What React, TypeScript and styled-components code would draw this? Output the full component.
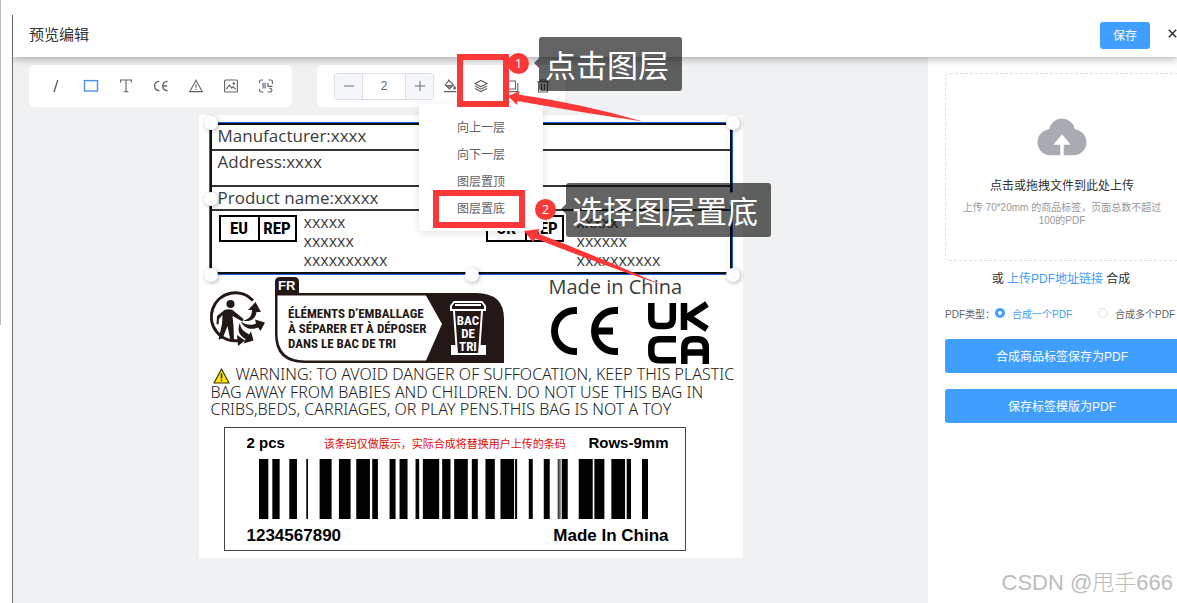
import React from "react";
import styled, { createGlobalStyle } from "styled-components";

const zh = `"Liberation Sans", "Noto Sans CJK SC", sans-serif`;
const label = `"Open Sans", "Noto Sans", sans-serif`;
const narrow = `"Liberation Sans Narrow", "Roboto Condensed", Roboto, sans-serif`;

const Global = createGlobalStyle`
  *, *::before, *::after { box-sizing: border-box; }
  body { margin: 0; background: #fff; font-family: ${zh}; color: #303133; overflow-x: hidden; }
  button { font-family: inherit; cursor: pointer; }
  svg { display: block; overflow: visible; }
`;

const Page = styled.div`
  position: relative;
  display: flex;
  min-height: 100vh;
  padding: 15px 0 0 12px;
  background: linear-gradient(#b9b9b9, #b9b9b9) 0 0 / 1px 325px no-repeat #fff;
`;

const Dialog = styled.main`
  flex: 1;
  min-width: 0;
  display: flex;
  flex-direction: column;
  border-left: 1px solid #6b6b6b;
`;

const Header = styled.header`
  position: relative;
  z-index: 1;
  display: flex;
  align-items: center;
  height: 42px;
  padding: 0 0 2px 16px;
  background: #fff;
  box-shadow: 0 2px 8px rgba(0, 0, 0, 0.3);
  clip-path: inset(0 0 -12px 0);
`;

const Title = styled.h1`
  flex: 1;
  margin: 0;
  font-size: 15px;
  font-weight: 400;
  line-height: 20px;
`;

const SaveButton = styled.button`
  width: 50px;
  height: 27px;
  padding: 0 0 2px;
  border: 0;
  border-radius: 3px;
  background: #409eff;
  color: #fff;
  font-size: 12px;
`;

const CloseButton = styled.button`
  margin-left: 18px;
  padding: 0 0 4px;
  border: 0;
  background: none;
  color: #303133;
`;

const Body = styled.div`
  flex: 1;
  display: flex;
`;

const Workspace = styled.section`
  flex: 1;
  min-width: 0;
  padding: 8px 16px 45px;
  background: #f0f1f3;
`;

const Toolbars = styled.div`
  position: relative;
  z-index: 2;
  display: flex;
  gap: 25px;
`;

const Toolbar = styled.div<{ $edit?: boolean }>`
  display: flex;
  align-items: center;
  height: 42px;
  padding: ${(p) => (p.$edit ? "0 7px 0 17px" : "0 9px")};
  border-radius: 5px;
  background: #fff;
`;

const ToolButton = styled.button<{ $active?: boolean; $slim?: boolean }>`
  display: flex;
  align-items: center;
  justify-content: center;
  width: ${(p) => (p.$slim ? 31 : 35)}px;
  height: 42px;
  padding: 0 0 1px;
  border: 0;
  background: none;
  color: ${(p) => (p.$active ? "#4a90f7" : "#606266")};
`;

const Stepper = styled.div`
  display: flex;
  width: 100px;
  height: 27px;
  border: 1px solid #dcdfe6;
  border-radius: 3px;
  overflow: hidden;
`;

const StepButton = styled.button`
  display: flex;
  align-items: center;
  justify-content: center;
  width: 27px;
  padding: 0;
  border: 0;
  background: #f5f7fa;
  color: #606266;
`;

const StepInput = styled.input`
  flex: 1;
  min-width: 0;
  padding: 0;
  border: 1px solid #dcdfe6;
  border-width: 0 1px;
  text-align: center;
  font-family: ${zh};
  font-size: 12px;
  color: #606266;
`;

const Anchor = styled.div`
  position: relative;
`;

const Menu = styled.ul`
  position: absolute;
  left: -46px;
  top: 39px;
  width: 124px;
  margin: 0;
  padding: 10px 0 9px;
  list-style: none;
  border-radius: 3px;
  background: #fff;
  box-shadow: 0 2px 8px rgba(0, 0, 0, 0.12);
`;

const MenuItem = styled.li`
  position: relative;
`;

const MenuButton = styled.button`
  width: 100%;
  height: 27px;
  padding: 0 0 3px;
  border: 0;
  background: none;
  font-size: 12px;
  color: #606266;
  display: block;
`;

const Callout = styled.div<{ $x: number; $y: number; $z?: number }>`
  position: absolute;
  left: ${(p) => p.$x}px;
  top: ${(p) => p.$y}px;
  z-index: ${(p) => p.$z ?? 2};
  pointer-events: none;
`;

const Frame = styled.div<{ $w: number; $h: number }>`
  width: ${(p) => p.$w}px;
  height: ${(p) => p.$h}px;
  border: 6px solid #fb3838;
`;

const Badge = styled.div`
  width: 21px;
  height: 21px;
  border-radius: 50%;
  background: #fb3838;
  color: #fff;
  font: 13px/20px "Open Sans", sans-serif;
  text-align: center;
`;

const Tip = styled.div`
  position: relative;
  height: 54px;
  padding: 0 13px 0 6px;
  border-radius: 3px;
  background: rgba(0, 0, 0, 0.61);
  color: #fff;
  font: 31px/54px "Noto Sans CJK SC", sans-serif;
  white-space: nowrap;
  &::before {
    content: "";
    position: absolute;
    left: -5px;
    top: 21px;
    border: 5px solid transparent;
    border-left: 0;
    border-right-color: rgba(0, 0, 0, 0.61);
  }
`;

const Canvas = styled.article`
  width: 544px;
  margin: 8px auto 0;
  padding: 8px 0 7px 11px;
  background: #fff;
  color: #3c3c3c;
  font-family: ${label};
`;

const Selection = styled.div`
  position: relative;
  width: 522px;
  border: 2px solid #111;
  outline: 1px solid #1f62ee;
`;

const Handles = styled.div`
  position: absolute;
  inset: -2px -3px -3px -1px;
`;

const Handle = styled.span<{ $x: number; $y: number }>`
  position: absolute;
  left: ${(p) => p.$x}%;
  top: ${(p) => p.$y}%;
  width: 14px;
  height: 14px;
  margin: -7px;
  border-radius: 50%;
  background: #fff;
  box-shadow: 1px 1px 4px rgba(0, 0, 0, 0.3);
`;

const Field = styled.div<{ $h: number }>`
  height: ${(p) => p.$h}px;
  padding-left: 6px;
  border-bottom: 2px solid #333;
  font-size: 17px;
  line-height: 22px;
`;

const Reps = styled.div`
  display: grid;
  grid-template-columns: 267px 1fr;
  height: 61px;
  padding: 2px 0 0 7px;
`;

const Rep = styled.div<{ $gap: number }>`
  display: flex;
  align-items: flex-start;
  gap: ${(p) => p.$gap}px;
`;

const RepMark = styled.div`
  display: grid;
  grid-template-columns: 37px 37px;
  margin-top: 2px;
  border: 2px solid #000;
  width: 78px;
  height: 27px;
  color: #000;
  font: bold 17px/23px ${narrow};
  text-align: center;
  span + span { border-left: 2px solid #000; }
`;

const RepLines = styled.div`
  font-size: 16px;
  line-height: 19px;
`;

const Marks = styled.div`
  display: flex;
  align-items: flex-start;
  padding-top: 3px;
  height: 92px;
`;

const Banner = styled.div`
  margin-left: 10px;
`;

const Origin = styled.div`
  margin-left: 44px;
`;

const OriginText = styled.div`
  font-size: 20px;
  line-height: 20px;
  margin-bottom: 5px;
`;

const Logos = styled.div`
  display: flex;
  gap: 30px;
`;

const Warning = styled.p`
  margin: 0;
  padding-left: 1px;
  font-family: "Noto Sans", "Open Sans", sans-serif;
  font-weight: 300;
  font-size: 16px;
  line-height: 17px;
  color: #222;
  white-space: nowrap;
  svg { display: inline-block; vertical-align: -4px; margin: 0 6px 0 2px; }
`;

const BarcodeCard = styled.div`
  width: 462px;
  height: 124px;
  margin: 9px 0 0 14px;
  padding: 5px 16px 0 22px;
  border: 1px solid #444;
  font-family: "Liberation Sans", "Noto Sans CJK SC", sans-serif;
  color: #000;
`;

const CardRow = styled.div<{ $large?: boolean }>`
  display: flex;
  justify-content: space-between;
  align-items: center;
  height: ${(p) => (p.$large ? 20 : 19)}px;
  font-size: ${(p) => (p.$large ? 17 : 15)}px;
  font-weight: bold;
`;

const Notice = styled.span`
  margin-left: 16px;
  font-size: 11px;
  font-weight: 400;
  color: #e00b0b;
`;

const BarBox = styled.div`
  padding: 7px 0 7px 12px;
`;

const Side = styled.aside`
  width: 249px;
  padding: 16px 0 0 17px;
  background: #fff;
`;

const Upload = styled.button`
  display: flex;
  flex-direction: column;
  align-items: center;
  width: 100%;
  height: 188px;
  padding: 34px 14px 0 15px;
  border: 1px dashed #dcdfe6;
  border-right: 0;
  border-radius: 5px 0 0 5px;
  background: #fff;
  color: #303133;
`;

const UploadTitle = styled.span`
  margin-top: 12px;
  font-size: 12px;
  line-height: 20px;
`;

const UploadHint = styled.span`
  margin-top: 5px;
  font-size: 10px;
  line-height: 13px;
  color: #999;
`;

const LinkRow = styled.p`
  margin: 8px 0 0;
  text-align: center;
  font-size: 12px;
  line-height: 20px;
  a { color: #409eff; text-decoration: none; }
`;

const Radios = styled.fieldset`
  display: flex;
  align-items: center;
  margin: 14px 0 16px;
  padding: 0;
  border: 0;
  height: 20px;
  font-size: 10px;
  color: #606266;
  white-space: nowrap;
`;

const RadioLabel = styled.label<{ $on?: boolean }>`
  display: flex;
  align-items: center;
  gap: 7px;
  margin-left: ${(p) => (p.$on ? 0 : 26)}px;
  color: ${(p) => (p.$on ? "#409eff" : "#606266")};
  input {
    appearance: none;
    width: 10px;
    height: 10px;
    margin: 0;
    border: 1px solid #dcdfe6;
    border-radius: 50%;
    background: #fff;
  }
  input:checked { border: 3px solid #409eff; }
`;

const WideButton = styled.button`
  display: block;
  width: 100%;
  height: 34px;
  margin-bottom: 16px;
  padding: 0 0 2px 2px;
  border: 0;
  border-radius: 3px 0 0 3px;
  background: #409eff;
  color: #fff;
  font-size: 12px;
`;

const Watermark = styled.div`
  position: absolute;
  right: 4px;
  bottom: 4px;
  color: #bdbdbd;
  font: 300 22px/32px "Liberation Sans", "Noto Sans CJK SC", sans-serif;
  text-shadow: 1px 1px 0 #fff;
`;

const Icon = ({ children, size = 14 }: { children: React.ReactNode; size?: number }) => (
  <svg width={size} height={size} viewBox="0 0 14 14" fill="none" stroke="currentColor" strokeWidth="1.1" aria-hidden="true">
    {children}
  </svg>
);

const shapes: { name: string; active?: boolean; art: React.ReactNode }[] = [
  { name: "直线", art: <path d="M8.8 1 5 13" strokeWidth="1.4" /> },
  { name: "矩形", active: true, art: <rect x="0.5" y="1.6" width="13" height="10.4" strokeWidth="1.4" /> },
  { name: "文本", art: <path d="M1.6 3.6V1h10.8v2.6M7 1v11.8M4.6 12.8h4.8" /> },
  { name: "CE 标志", art: <path d="M5.4 2.4C-1 2-1 12 5.4 11.6M13.6 2.4C7 2 7 12 13.6 11.6M9.2 7h3.8" strokeWidth="1.3" /> },
  { name: "警告", art: <path d="M7 1.2 13.2 12.6H.8zM7 5.2v3.6M7 9.8v1.3" /> },
  {
    name: "图片",
    art: (
      <>
        <rect x="0.6" y="1" width="12.8" height="12" rx="1" />
        <path d="m2.2 10.2 3.2-4 2.4 3 1.4-1.4 2.6 2.6" />
        <circle cx="9.8" cy="4.6" r=".7" />
      </>
    ),
  },
  {
    name: "条码",
    art: (
      <>
        <path d="M.6 4V2.4Q.6 1 2 1h2M9.6 1H12q1.4 0 1.4 1.4V5M.6 9.8v2Q.6 13 2 13h2.4" />
        <path d="M4.2 4v5.6M6.2 4v5.6" strokeWidth="1.8" stroke="#8d96a8" />
        <path d="M9 4v3.4h4.4M8.6 13h3a1.9 1.9 0 0 0 0-3.6h-1.2" />
      </>
    ),
  },
];

/* Each bar is [offset, width] in thirds of a pixel. */
const bars = [
  [0, 28], [40, 22], [91, 23], [142, 5], [182, 36], [240, 35], [292, 41], [340, 17], [392, 18], [422, 24],
  [470, 11], [492, 49], [550, 25], [586, 41], [639, 18], [680, 28], [725, 41], [769, 6], [810, 12], [855, 18],
  [897, 3], [902, 3], [909, 18], [960, 42], [1007, 30], [1058, 41], [1104, 13], [1150, 18],
];

const Bars = () => (
  <svg width="389" height="60" viewBox="0 0 1168 180" preserveAspectRatio="none" role="img" aria-label="1234567890">
    {bars.map(([x, w]) => (
      <rect key={x} x={x} width={w} height="180" />
    ))}
  </svg>
);

const Triman = () => (
  <svg width="55" height="86" viewBox="0 0 55 86" fill="#231815" aria-hidden="true">
    <path d="M43 23.500A24 24 0 1 0 29 63.500" fill="none" stroke="#231815" strokeWidth="3" />
    <path d="m27 58 8 5.500-7 5.500z" />
    <circle cx="20.500" cy="27" r="4" />
    <path d="M14.500 33q4-1.500 8 0l11 9-1 2.500-10-5.500 1 10 .5 15h-3.500l-3-15-5 12.500-4 1 3.500-15.500.5-9-3.500 4-.5 5.500-2-.5.5-8z" />
    <path d="M33 43.500c6-1 9-4.500 9-10.500h-4l7.500-8 5.500 10h-4.500c-1 7-6 10.500-13.500 8.500z" />
    <path d="M31 44.500c5 4 11 4 15 2l-1-4 10 3-4.500 8.500-2.500-3.500c-7 3-14 1-17-6z" />
    <path d="M30 45.500c0 6 4 9 9 12l2-3 2.500 9-10 3 2-4.500c-7-4-8.500-9-5.500-16.500z" />
  </svg>
);

const SortingBanner = () => (
  <svg width="230" height="87" viewBox="0 0 230 87" role="img" aria-label="Consigne de tri">
    <path d="M0 16V5q0-5 5-5h14q5 0 5 5v11h177q28 0 28 26v44H29Q0 86 0 57z" fill="#231815" />
    <path d="M2.500 18.500H151L167 47l-16 36.500H30Q2.500 83 2.500 57z" fill="#fff" />
    <g fontFamily={narrow} fontWeight="bold" fill="#231815" fontSize="13">
      <text x="13" y="41">ÉLÉMENTS D’EMBALLAGE</text>
      <text x="13" y="56">À SÉPARER ET À DÉPOSER</text>
      <text x="13" y="71">DANS LE BAC DE TRI</text>
    </g>
    <text x="3" y="13" fontFamily="Liberation Sans" fontWeight="bold" fontSize="13" fill="#fff">FR</text>
    <g fill="none" stroke="#fff" strokeWidth="2">
      <path d="M176 33v-4l3-4h28l3 4v4zM180 28h26" />
      <path d="m179 34 3 43h22l3-43" />
      <path d="M177 69h4v8h-4zM206 69h4v8h-4z" fill="#fff" />
    </g>
    <g fontFamily={narrow} fontWeight="bold" fill="#fff" fontSize="13" textAnchor="middle">
      <text x="193" y="48">BAC</text>
      <text x="193" y="61">DE</text>
      <text x="193" y="74">TRI</text>
    </g>
  </svg>
);

const CeLogo = () => (
  <svg width="69" height="60" viewBox="0 0 69 60" fill="none" stroke="#000" strokeWidth="7" role="img" aria-label="CE">
    <path d="M28 8.500h-2a20.500 20.500 0 0 0 0 41h2M69 8.500h-3a20.500 20.500 0 0 0 0 41h3M46 29h18" />
  </svg>
);

const UkcaLogo = () => (
  <svg width="61" height="62" viewBox="0 0 61 62" fill="none" stroke="#000" strokeWidth="6.500" role="img" aria-label="UKCA">
    <path d="M3.300 1v16q0 7 7 7h7.500q7 0 7-7V1M36 1v27M59 2 40 14.500 59 27" />
    <path d="M28 37.300H11.300q-8 0-8 8v5q0 8 8 8H28M36.300 62V46q0-8.700 8.500-8.700h4.500q8.500 0 8.500 8.700v16M36 50.500h21" />
  </svg>
);

const WarnSign = () => (
  <svg width="17" height="16" viewBox="0 0 17 16" aria-hidden="true">
    <path d="M8.500 1 16 15H1z" fill="#ffe500" stroke="#3a3500" strokeWidth="1.200" strokeLinejoin="round" />
    <path d="M8.500 5.500v5M8.500 11.800v1.500" stroke="#222" strokeWidth="1.500" />
  </svg>
);

const handles = [[0, 0], [50, 0], [100, 0], [0, 50], [100, 50], [0, 100], [50, 100], [100, 100]];

const RepBlock = ({ region, gap }: { region: string; gap: number }) => (
  <Rep $gap={gap}>
    <RepMark>
      <span>{region}</span>
      <span>REP</span>
    </RepMark>
    <RepLines>
      xxxxx
      <br />
      xxxxxx
      <br />
      xxxxxxxxxx
    </RepLines>
  </Rep>
);

const LayerMenu = () => (
  <Menu>
    {["向上一层", "向下一层", "图层置顶"].map((t) => (
      <MenuItem key={t}>
        <MenuButton>{t}</MenuButton>
      </MenuItem>
    ))}
    <MenuItem>
      <MenuButton>图层置底</MenuButton>
      <Callout $x={14} $y={-5}>
        <Frame $w={92} $h={38} />
      </Callout>
      <Callout $x={116} $y={4}>
        <Badge>2</Badge>
      </Callout>
      <Callout $x={147} $y={-12} $z={1}>
        <Tip>选择图层置底</Tip>
      </Callout>
      <Callout $x={105} $y={36}>
        <svg width="138" height="54" viewBox="0 0 138 54" fill="#fb3838" aria-hidden="true">
          <path d="M0 0 15-2 14 2.500Q75 26 138 54 70 31 11.500 7.500L9 11z" />
        </svg>
      </Callout>
    </MenuItem>
  </Menu>
);

export default function App() {
  return (
    <>
      <Global />
      <Page>
        <Dialog>
          <Header>
            <Title>预览编辑</Title>
            <SaveButton>保存</SaveButton>
            <CloseButton aria-label="关闭">
              <svg width="9" height="9" viewBox="0 0 9 9" stroke="currentColor" strokeWidth="1.5">
                <path d="m.8.8 7.400 7.400M8.200.8.8 8.200" />
              </svg>
            </CloseButton>
          </Header>
          <Body>
            <Workspace>
              <Toolbars>
                <Toolbar>
                  {shapes.map((s) => (
                    <ToolButton key={s.name} $active={s.active} aria-label={s.name}>
                      <Icon>{s.art}</Icon>
                    </ToolButton>
                  ))}
                </Toolbar>
                <Toolbar $edit>
                  <Stepper>
                    <StepButton aria-label="减少">
                      <Icon size={12}><path d="M1 7h12" /></Icon>
                    </StepButton>
                    <StepInput aria-label="线宽" defaultValue="2" />
                    <StepButton aria-label="增加">
                      <Icon size={12}><path d="M1 7h12M7 1v12" /></Icon>
                    </StepButton>
                  </Stepper>
                  <ToolButton $slim aria-label="填充">
                    <Icon>
                      <path d="M1 12.600h12.400" strokeWidth="1.300" />
                      <path d="m6 1.500 4.500 4.500-4 4L2.200 6zM5 .6l2 2M2.600 6.600h7.600M4 8h5" />
                      <path d="M11.600 7.500q1.600 2 0 2.600-1.600-.6 0-2.600z" fill="currentColor" />
                    </Icon>
                  </ToolButton>
                  <Anchor>
                    <ToolButton $slim aria-label="图层">
                      <Icon>
                        <path d="M7 1.400 13 4.600 7 7.800 1 4.600zM1 7l6 3.200L13 7M1 9.400l6 3.200 6-3.200" />
                      </Icon>
                    </ToolButton>
                    <LayerMenu />
                    <Callout $x={-8} $y={-11}>
                      <Frame $w={52} $h={53} />
                    </Callout>
                    <Callout $x={43} $y={-12}>
                      <Badge>1</Badge>
                    </Callout>
                    <Callout $x={74} $y={-28} $z={1}>
                      <Tip>点击图层</Tip>
                    </Callout>
                    <Callout $x={43} $y={31}>
                      <svg width="135" height="26" viewBox="0 0 135 26" fill="#fb3838" aria-hidden="true">
                        <path d="M0 0 12-5 10.500-1.500Q75 8 135 25.500 70 16 9.500 5L9 9z" />
                      </svg>
                    </Callout>
                  </Anchor>
                  <ToolButton $slim aria-label="复制">
                    <Icon>
                      <path d="M1 2h9.500v8H1zM12.800 4v8.600H3.500" />
                    </Icon>
                  </ToolButton>
                  <ToolButton $slim aria-label="删除">
                    <Icon>
                      <path d="M1 2.800h12M4.500 2.500V1h5v1.500M2.500 3v10h9V3M5.500 5v6M8.500 5v6" />
                    </Icon>
                  </ToolButton>
                </Toolbar>
              </Toolbars>

              <Canvas>
                <Selection>
                  <Field $h={26}>Manufacturer:xxxx</Field>
                  <Field $h={36}>Address:xxxx</Field>
                  <Field $h={24}>Product name:xxxxx</Field>
                  <Reps>
                    <RepBlock region="EU" gap={7} />
                    <RepBlock region="UK" gap={13} />
                  </Reps>
                  <Handles>
                    {handles.map(([x, y]) => (
                      <Handle key={`${x}-${y}`} $x={x} $y={y} />
                    ))}
                  </Handles>
                </Selection>
                <Marks>
                  <Triman />
                  <Banner>
                    <SortingBanner />
                  </Banner>
                  <Origin>
                    <OriginText>Made in China</OriginText>
                    <Logos>
                      <CeLogo />
                      <UkcaLogo />
                    </Logos>
                  </Origin>
                </Marks>
                <Warning>
                  <WarnSign />
                  WARNING: TO AVOID DANGER OF SUFFOCATION, KEEP THIS PLASTIC
                  <br />
                  BAG AWAY FROM BABIES AND CHILDREN. DO NOT USE THIS BAG IN
                  <br />
                  CRIBS,BEDS, CARRIAGES, OR PLAY PENS.THIS BAG IS NOT A TOY
                </Warning>
                <BarcodeCard>
                  <CardRow>
                    <span>2 pcs</span>
                    <Notice>该条码仅做展示，实际合成将替换用户上传的条码</Notice>
                    <span>Rows-9mm</span>
                  </CardRow>
                  <BarBox>
                    <Bars />
                  </BarBox>
                  <CardRow $large>
                    <span>1234567890</span>
                    <span>Made In China</span>
                  </CardRow>
                </BarcodeCard>
              </Canvas>
            </Workspace>

            <Side>
              <Upload>
                <svg width="56" height="56" viewBox="0 0 1024 1024" fill="#a8abb2" aria-hidden="true">
                  <path d="M544 864V672h128L512 480 352 672h128v192H320v-1.600c-5.376.32-10.496 1.600-16 1.600A240 240 0 0 1 64 624c0-123.136 93.120-223.488 212.608-237.248A239.808 239.808 0 0 1 512 192a239.872 239.872 0 0 1 235.456 194.752c119.488 13.760 212.480 114.112 212.480 237.248a240 240 0 0 1-240 240c-5.376 0-10.560-1.280-16-1.600v1.600z" />
                </svg>
                <UploadTitle>点击或拖拽文件到此处上传</UploadTitle>
                <UploadHint>上传 70*20mm 的商品标签，页面总数不超过100的PDF</UploadHint>
              </Upload>
              <LinkRow>
                或 <a href="#link">上传PDF地址链接</a> 合成
              </LinkRow>
              <Radios>
                <span>PDF类型：</span>
                <RadioLabel $on>
                  <input type="radio" name="pdf" defaultChecked />
                  合成一个PDF
                </RadioLabel>
                <RadioLabel>
                  <input type="radio" name="pdf" />
                  合成多个PDF
                </RadioLabel>
              </Radios>
              <WideButton>合成商品标签保存为PDF</WideButton>
              <WideButton>保存标签模版为PDF</WideButton>
            </Side>
          </Body>
        </Dialog>
        <Watermark>CSDN @甩手666</Watermark>
      </Page>
    </>
  );
}
